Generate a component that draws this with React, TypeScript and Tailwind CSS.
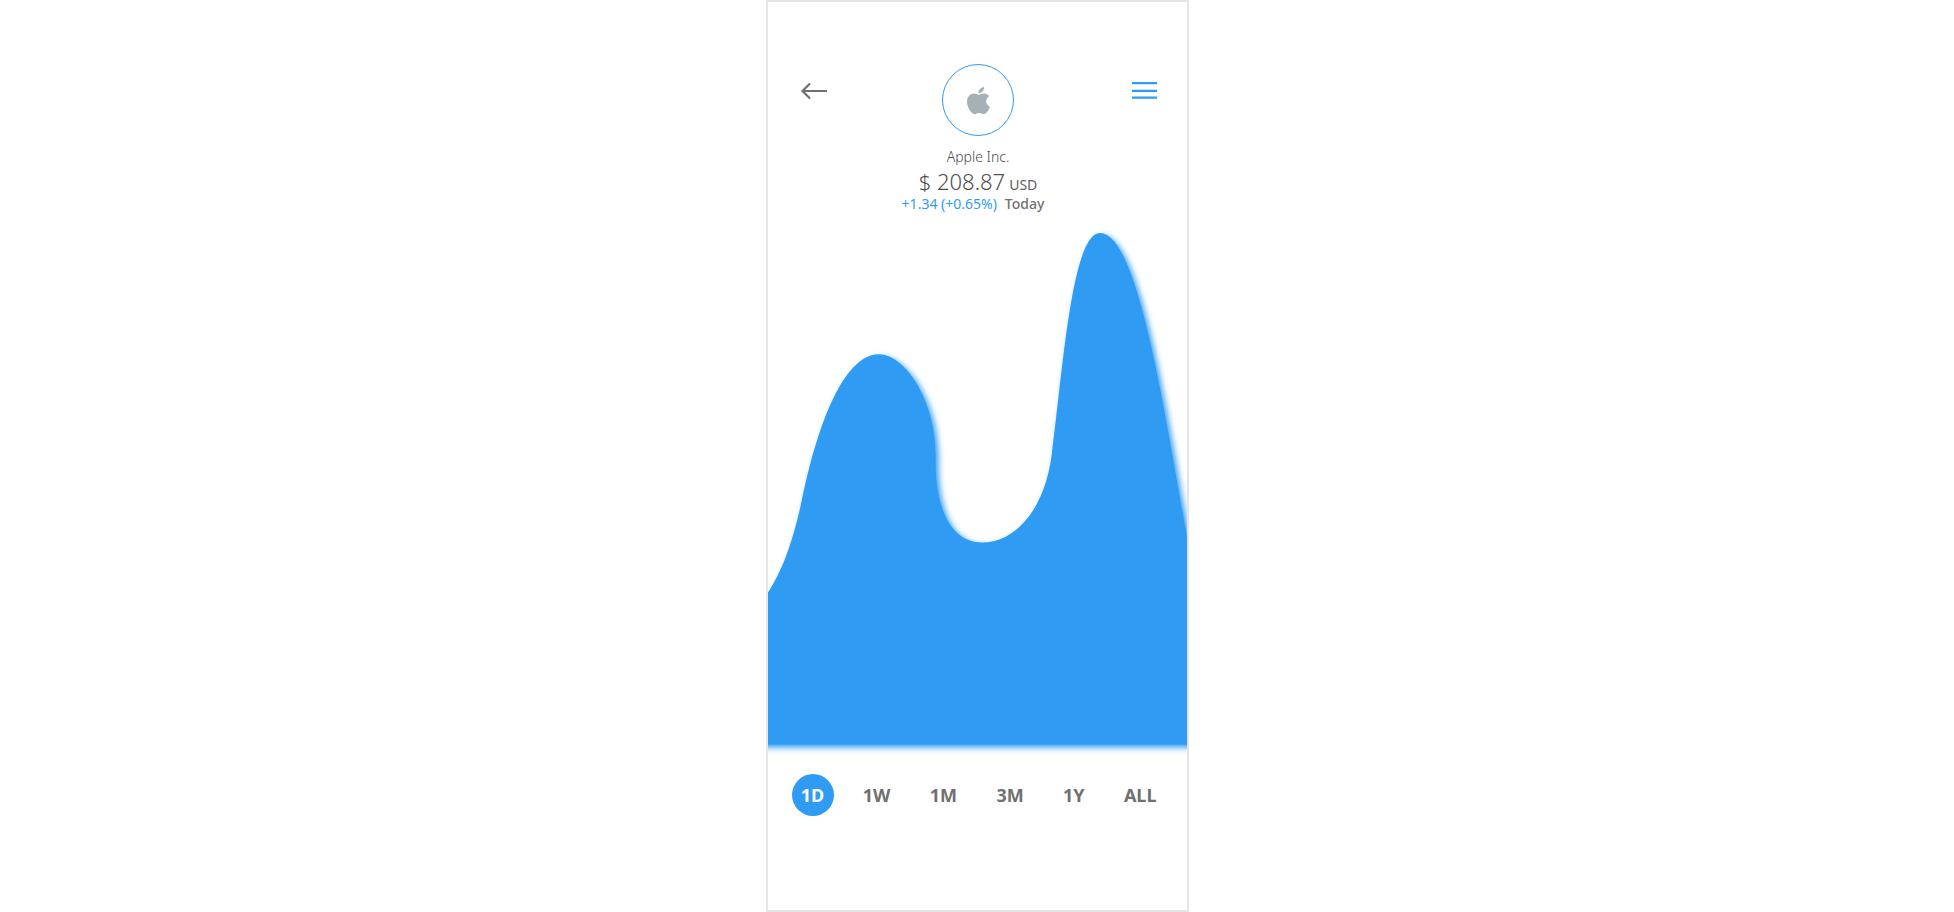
import { useState } from "react";

const ranges = ["1D", "1W", "1M", "3M", "1Y", "ALL"];

const BackIcon = () => (
  <svg width="28" height="18" viewBox="0 0 28 18" fill="none" stroke="#707070" strokeWidth="2.200" aria-hidden="true">
    <path d="M27 9H2.500M10 1.500L2.500 9L10 16.500" />
  </svg>
);

const MenuIcon = () => (
  <svg width="25" height="18" viewBox="0 0 25 18" fill="#2f9bf3" aria-hidden="true">
    <path d="M0 0h25v2.300H0zM0 7.700h25V10H0zM0 14.500h25v2.300H0z" />
  </svg>
);

const AppleLogo = () => (
  <svg width="23" height="27" viewBox="0 0 814 1000" preserveAspectRatio="none" fill="#a5b1b7" aria-hidden="true">
    <path d="M788.100 340.900c-5.800 4.500-108.200 62.200-108.200 190.500 0 148.400 130.300 200.900 134.200 202.200-.6 3.200-20.700 71.900-68.700 141.900-42.800 61.600-87.500 123.100-155.500 123.100s-85.500-39.500-164-39.500c-76.500 0-103.700 40.800-165.900 40.800s-105.600-57-155.500-127C46.700 790.700 0 663 0 541.800c0-194.400 126.400-297.500 250.800-297.500 66.100 0 121.200 43.400 162.700 43.400 39.500 0 101.100-46 176.300-46 28.500 0 130.900 2.600 198.300 99.200zm-234-181.500c31.100-36.900 53.100-88.100 53.100-139.300 0-7.100-.6-14.300-1.900-20.100-50.600 1.900-110.800 33.700-147.100 75.800-28.500 32.400-55.100 83.600-55.100 135.500 0 7.800 1.300 15.600 1.900 18.100 3.200.6 8.400 1.300 13.600 1.300 45.400 0 102.500-30.400 135.500-71.300z" />
  </svg>
);

const PriceChart = () => (
  <svg className="block h-auto w-full" viewBox="0 0 419 540" role="img" aria-label="Price history">
    <defs>
      <filter id="chart-shadow" x="-5%" y="-5%" width="110%" height="110%" colorInterpolationFilters="sRGB">
        <feDropShadow dx="3" dy="3" stdDeviation="3" floodColor="#2f9bf3" />
      </filter>
    </defs>
    <path
      filter="url(#chart-shadow)"
      fill="#2f9bf3"
      d="M-20 400Q-8 385 0 372.500C13 353 24 325 33 284C43 233 69 134.300 111 134.300C136 134.300 167 178 167.500 234C166 290 184 322.500 214 322.500C247 322.500 277 290 284 233C295 150 304 13 332 13C370 13 396 190 419 317L439 427V524.500H-20Z"
    />
  </svg>
);

export default function App() {
  const [active, setActive] = useState("1D");

  return (
    <div className="flex min-h-screen justify-center bg-white font-['Noto_Sans','Open_Sans',sans-serif] text-[#707070]">
      <main className="flex w-full max-w-[423px] flex-col border-2 border-[#e5e5e5] bg-white">
        <header className="flex items-start justify-between px-[30px] pt-[62px]">
          <button type="button" aria-label="Back" className="mt-[18px] flex w-8 justify-end pr-0.5">
            <BackIcon />
          </button>
          <div className="flex size-18 items-center justify-center rounded-full border border-[#2f9bf3]">
            <AppleLogo />
          </div>
          <button type="button" aria-label="Menu" className="mt-[18px] flex w-[30px] justify-end">
            <MenuIcon />
          </button>
        </header>

        <section className="flex flex-col items-center pt-[9px] pb-1.5 pl-0.5">
          <h1 className="text-sm leading-6 font-light text-[#4c4c4c]">Apple Inc.</h1>
          <p className="flex items-baseline gap-1 text-[22px] leading-6 font-light text-[#4c4c4c]">
            $ 208.87 <span className="text-sm leading-4 font-normal text-[#606060]">USD</span>
          </p>
          <p className="flex gap-2 pt-px pr-2.5 text-sm leading-5">
            <span className="text-[#2f9bf3]">+1.34 (+0.65%)</span>
            <span className="font-medium">Today</span>
          </p>
        </section>

        <PriceChart />

        <nav aria-label="Time range" className="flex items-center justify-between pt-3.5 pr-5 pl-6">
          {ranges.map((range) => (
            <button
              key={range}
              type="button"
              aria-pressed={active === range}
              onClick={() => setActive(range)}
              className={
                active === range
                  ? "size-[42px] rounded-full bg-[#2f9bf3] text-lg leading-6 font-bold text-white"
                  : "h-[42px] px-2.5 text-lg leading-6 font-bold text-[#707070]"
              }
            >
              {range}
            </button>
          ))}
        </nav>
      </main>
    </div>
  );
}
